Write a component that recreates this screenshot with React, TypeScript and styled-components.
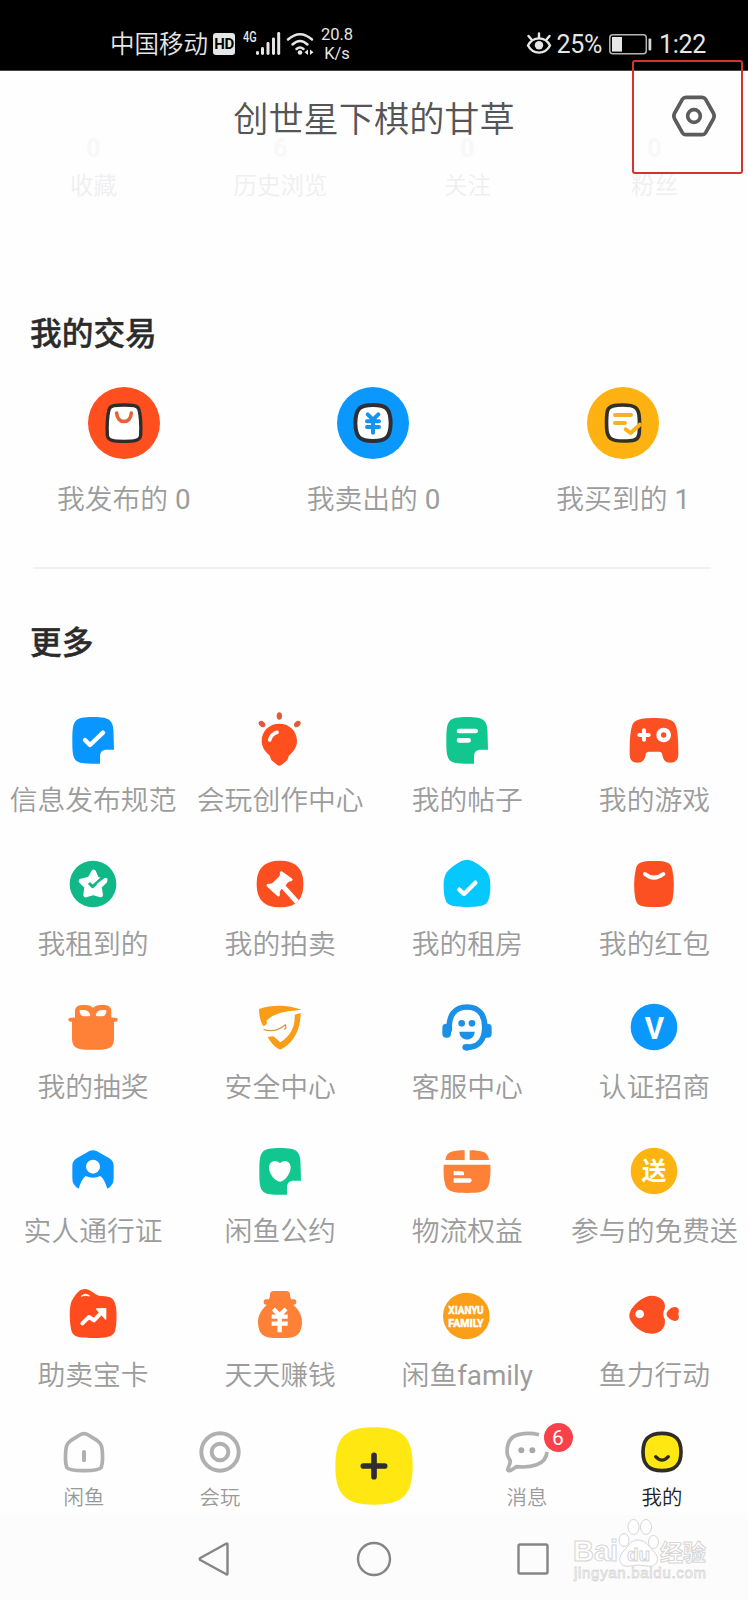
import React from "react";
import styled, { createGlobalStyle } from "styled-components";

const GlobalStyle = createGlobalStyle`
  * { box-sizing: border-box; }
  body {
    margin: 0;
    background: #fff;
    font-family: Roboto, "Noto Sans CJK SC", sans-serif;
    font-weight: 350;
  }
  svg { display: block; overflow: visible; }
`;

const Screen = styled.div`
  position: relative;
  width: 748px;
  height: 1600px;
  overflow: hidden;
  background: #fefefe;
  display: flex;
  flex-direction: column;
`;

/* ---------- status bar ---------- */
const StatusBar = styled.header`
  height: 71px;
  flex: none;
  background: #000;
  border-bottom: 1px solid #4a4446;
  color: #e6e6e6;
  display: flex;
  justify-content: space-between;
  padding: 17px 42px 0 110px;
`;
const StatusGroup = styled.div`
  display: flex;
  align-items: center;
  height: 54px;
`;
const Carrier = styled.span`
  font-size: 24.5px;
  line-height: 30px;
  white-space: nowrap;
  width: 103px;
  padding-top: 2px;
`;
const HdBadge = styled.span`
  width: 22px;
  height: 22px;
  border-radius: 3px;
  background: #e6e6e6;
  color: #000;
  font-size: 15px;
  font-weight: 700;
  line-height: 23px;
  text-align: center;
  letter-spacing: -0.5px;
`;
const NetworkType = styled.span`
  font-size: 14px;
  font-weight: 500;
  line-height: 14px;
  width: 17px;
  margin: -14px -4px 0 8px;
  transform: scaleX(0.78);
  transform-origin: left;
`;
const Speed = styled.div`
  width: 44px;
  margin-left: 0;
  font-size: 16.5px;
  font-weight: 400;
  line-height: 19px;
  text-align: center;
`;
const StatusText = styled.span<{ $left: number }>`
  font-size: 25px;
  font-weight: 400;
  line-height: 30px;
  letter-spacing: -0.3px;
  padding-top: 1px;
  margin-left: ${(p) => p.$left}px;
`;

/* ---------- profile header ---------- */
const ProfileHeader = styled.section`
  height: 242px;
  flex: none;
`;
const TitleRow = styled.div`
  display: grid;
  grid-template-columns: 1fr auto 1fr;
  align-items: start;
  height: 69px;
  padding: 23px 32px 0;
`;
const Title = styled.h1`
  grid-column: 2;
  margin: 8px 0 0;
  font-size: 35.2px;
  line-height: 36px;
  font-weight: 350;
  color: #555;
`;
const SettingsButton = styled.div`
  justify-self: end;
  width: 44px;
  height: 44px;
`;
const Stats = styled.div`
  display: grid;
  grid-template-columns: repeat(4, 1fr);
  text-align: center;
`;
const Stat = styled.div`
  display: flex;
  flex-direction: column;
`;
const StatValue = styled.span`
  height: 31px;
  font-size: 25px;
  line-height: 18px;
  font-weight: 700;
  color: #f8f8f8;
`;
const StatLabel = styled.span`
  font-size: 23.5px;
  line-height: 30px;
  color: #efefef;
`;

/* ---------- sections ---------- */
const SectionTitle = styled.h2<{ $gap: number }>`
  margin: 0 0 ${(p) => p.$gap}px 30px;
  padding-top: 2px;
  font-size: 31.7px;
  line-height: 40px;
  font-weight: 500;
  color: #2b2b2b;
  flex: none;
  -webkit-text-stroke: 0.4px #2b2b2b;
`;
const Trades = styled.div`
  display: grid;
  grid-template-columns: repeat(3, 1fr);
  height: 180px;
  flex: none;
  margin-left: -1px;
`;
const Cell = styled.div<{ $gap: number }>`
  display: flex;
  flex-direction: column;
  align-items: center;
  gap: ${(p) => p.$gap}px;
`;
const Label = styled.span`
  font-size: 27.8px;
  line-height: 32px;
  color: #9c9c9c;
  white-space: nowrap;
`;
const Latin = styled.span`
  font-weight: 400;
`;
const Divider = styled.div`
  height: 2px;
  flex: none;
  margin: 0 37px 53px 33px;
  background: #f1f1f1;
`;
const MoreGrid = styled.div`
  display: grid;
  grid-template-columns: repeat(4, 1fr);
  grid-auto-rows: 107px;
  row-gap: 36.7px;
  height: 681px;
  flex: none;
  margin-left: -0.5px;
`;

/* ---------- bottom bars ---------- */
const TabBar = styled.nav`
  display: grid;
  grid-template-columns: 168px 104px 204px 102px 168px;
  height: 124px;
  flex: none;
  padding-top: 36px;
`;
const Tab = styled.div<{ $active?: boolean }>`
  position: relative;
  display: flex;
  flex-direction: column;
  align-items: center;
  gap: 8px;
  font-size: 20.4px;
  line-height: 26px;
  color: ${(p) => (p.$active ? "#222" : "#9a9a9a")};
`;
const Badge = styled.span`
  position: absolute;
  left: 67.5px;
  top: -4px;
  width: 29px;
  height: 29px;
  border-radius: 50%;
  background: #f8414a;
  color: #fff;
  font-size: 21px;
  font-weight: 400;
  line-height: 30px;
  text-align: center;
`;
const SystemNav = styled.footer`
  flex: 1;
  background: #fcfcfc;
  display: flex;
  align-items: center;
  justify-content: center;
  gap: 121px;
  padding-top: 3px;
`;

/* ---------- overlays ---------- */
const HighlightBox = styled.div`
  position: absolute;
  left: 632px;
  top: 60px;
  width: 111px;
  height: 114px;
  border: 2px solid #d8322c;
  border-radius: 3px;
`;
const Watermark = styled.div`
  position: absolute;
  left: 570px;
  top: 1515px;
`;

const NOTE =
  "M0-69C27-69 43-67 52-57C61-48 62-30 62-8L63 29H42C27 29 21 36 21 50V71H-6C-30 71-44 69-53 59C-62 48-62 27-62 0C-62-27-61-47-52-57C-43-67-27-69 0-69Z";

const Art = ({ size = 60, children }: { size?: number; children: React.ReactNode }) => (
  <svg
    width={size}
    height={size}
    viewBox={`${-size * 1.5} ${-size * 1.5} ${size * 3} ${size * 3}`}
    fill="none"
    strokeLinecap="round"
    strokeLinejoin="round"
  >
    {children}
  </svg>
);

const tradeItems = [
  {
    label: "我发布的",
    latin: " 0",
    art: (
      <>
        <circle r="108" fill="#ff4f1f" />
        <path d="M0-54C25-54 41-53 45-40C50-20 51 15 50 37C48 53 30 55 0 55C-30 55-48 53-50 37C-51 15-50-20-45-40C-41-53-25-54 0-54Z" fill="#fff" stroke="#2f2c2c" strokeWidth="10" />
        <path d="M-22-30C-20 4 20 4 22-30" stroke="#e8603a" strokeWidth="11" />
      </>
    ),
  },
  {
    label: "我卖出的",
    latin: " 0",
    art: (
      <>
        <circle r="108" fill="#0a98ff" />
        <path d="M0-54C40-54 52-43 53 0C52 43 40 54 0 54S-52 43-53 0C-52-43-40-54 0-54Z" fill="#fff" stroke="#2b2f36" strokeWidth="12" />
        <path d="M-16-26L0-10L16-26M0-9V29M-18-5H18M-18 12H18" stroke="#1494f0" strokeWidth="12" />
      </>
    ),
  },
  {
    label: "我买到的",
    latin: " 1",
    art: (
      <>
        <circle r="108" fill="#fdb211" />
        <path d="M0-54C36-54 48-46 49-14C50 10 50 20 48 35C45 52 30 54 0 54C-36 54-48 46-49 14C-50-8-50-24-46-38C-42-52-26-54 0-54Z" fill="#fff" stroke="#33302a" strokeWidth="11" />
        <path d="M-24-24H24M-24 0H6" stroke="#f0b42a" strokeWidth="12" />
        <path d="M8 19L23 30L50 5" stroke="#fdb211" strokeWidth="12" />
      </>
    ),
  },
];

const moreItems = [
  {
    label: "信息发布规范",
    art: (
      <>
        <path d={NOTE} fill="#0996ff" />
        <path d="M-24 0L-9 15L30-22" stroke="#fff" strokeWidth="13" />
      </>
    ),
  },
  {
    label: "会玩创作中心",
    art: (
      <>
        <path d="M-2-49C29-49 51-26 51 3C51 23 39 36 28 46C24 50 26 57 19 63L4 75Q-2 80-8 75L-23 63C-30 57-28 50-32 46C-43 36-55 23-55 3C-55-26-33-49-2-49Z" fill="#ff4f1f" />
        <path d="M-31 0Q-27-17-9-23" stroke="#fff" strokeWidth="11" />
        <g fill="#dd5a3b">
          <ellipse cx="-2" cy="-72" rx="8" ry="11" />
          <ellipse cx="-54" cy="-48" rx="8" ry="11" transform="rotate(-48 -54 -48)" />
          <ellipse cx="52" cy="-48" rx="8" ry="11" transform="rotate(48 52 -48)" />
        </g>
      </>
    ),
  },
  {
    label: "我的帖子",
    art: (
      <>
        <path d={NOTE} fill="#12c78f" />
        <path d="M-24-27H26M-24 1H5" stroke="#fff" strokeWidth="14" />
      </>
    ),
  },
  {
    label: "我的游戏",
    art: (
      <>
        <path d="M0-66C50-66 62-58 67-38C72-20 73 10 73 42C73 60 64 68 49 68C34 68 27 58 25 44Q24 35 15 35H-15Q-24 35-25 44C-27 58-34 68-50 68C-65 68-73 60-73 42C-73 10-72-20-67-38C-62-58-50-66 0-66Z" fill="#fc5022" />
        <path d="M-44-15H-16M-30-29V-1" stroke="#fff" strokeWidth="12" />
        <circle cx="29" cy="-15" r="15" stroke="#fff" strokeWidth="14" />
      </>
    ),
  },
  {
    label: "我租到的",
    art: (
      <>
        <circle r="70" fill="#0fb886" />
        <path d="M2-36L11-15L36-9L19 8L23 33L1 26L-22 33L-19 8L-36-9L-10-15Z" fill="#fff" stroke="#fff" strokeWidth="14" />
        <path d="M-12-3L-1 8L32-22" stroke="#0fb886" strokeWidth="9" strokeLinecap="butt" />
        <path d="M17 2L38-13" stroke="#fff" strokeWidth="11" />
      </>
    ),
  },
  {
    label: "我的拍卖",
    art: (
      <>
        <path d="M0-70C46-70 70-48 70 0S46 70 0 70S-70 48-70 0S-46-70 0-70Z" fill="#fc4f20" />
        <path d="M4-34L33-13C22-12 18-7 15 0L0 13C-5 18-7 24-5 33L-36 4C-25 5-20 2-15-4L-2-16C4-21 6-27 4-34Z" fill="#fff" stroke="#fff" strokeWidth="9" />
        <path d="M7 5L51 54" stroke="#fff" strokeWidth="15" strokeLinecap="butt" />
      </>
    ),
  },
  {
    label: "我的租房",
    art: (
      <>
        <path d="M-18-68Q0-78 18-68C32-60 44-52 54-43C66-32 70-16 70 5C70 22 69 34 65 46C60 64 47 69 0 69S-60 64-65 46C-69 34-70 22-70 5C-70-16-66-32-54-43C-44-52-32-60-18-68Z" fill="#05c8ff" />
        <path d="M-23 17L-9 30L25-4" stroke="#fff" strokeWidth="13" />
      </>
    ),
  },
  {
    label: "我的红包",
    art: (
      <>
        <path d="M0-69C40-69 51-64 55-43C61-15 61 15 56 44C51 65 40 69 0 69S-51 65-56 44C-61 15-61-15-55-43C-51-64-40-69 0-69Z" fill="#fc5022" />
        <path d="M-27-30Q0-8 28-30" stroke="#fff" strokeWidth="12" />
      </>
    ),
  },
  {
    label: "我的抽奖",
    art: (
      <>
        <path d="M-54-25V-46Q-54-66-34-66H-20Q-7-66 0-58Q7-66 20-66H34Q55-66 55-46V-25Z" fill="#ff8138" />
        <path d="M-38-51H-26Q-12-50-8-35Q-9-32-14-32H-28Q-38-33-40-46Q-41-51-38-51Z" fill="#fff" />
        <path d="M38-51H26Q12-50 8-35Q9-32 14-32H28Q38-33 40-46Q41-51 38-51Z" fill="#fff" />
        <path d="M-68-22H68" stroke="#ff8138" strokeWidth="12" />
        <path d="M-63-28H63V34C63 60 50 68 20 68H-20C-50 68-63 60-63 34Z" fill="#ff8138" />
      </>
    ),
  },
  {
    label: "安全中心",
    art: (
      <>
        <path d="M-63-54C-22-67 22-67 64-52C30-48-13-45-35-24L-41-18Q-34-9-49-2C-58-11-63-36-63-54Z" fill="#f99c16" />
        <path d="M62-42C62 4 43 50 0 68C-18 60-29 44-37 30L-20 28L1 46C32 26 46 0 44-37Z" fill="#f99c16" />
        <path d="M-48 8Q-12 18 16-7Q20 5 14 6" stroke="#d99a48" strokeWidth="4" />
      </>
    ),
  },
  {
    label: "客服中心",
    art: (
      <>
        <path d="M-53 8C-56-34-37-60 0-60C37-60 56-34 53 8C51 38 34 61 0 61" stroke="#1a91e6" strokeWidth="17" />
        <rect x="-74" y="-10" width="26" height="42" rx="12" fill="#1a91e6" />
        <rect x="48" y="-10" width="26" height="42" rx="12" fill="#1a91e6" />
        <ellipse cx="-1" cy="61" rx="13" ry="10" fill="#1a91e6" />
        <circle cx="-16" cy="-11" r="10" fill="#1a91e6" />
        <circle cx="15" cy="-11" r="10" fill="#1a91e6" />
        <path d="M-23 14H23C22 45-22 45-23 14Z" fill="#1a91e6" />
      </>
    ),
  },
  {
    label: "认证招商",
    art: (
      <>
        <circle r="70" fill="#0a97fe" />
        <text x="-28" y="35" textLength="58" lengthAdjust="spacingAndGlyphs" fontSize="93" fontWeight="700" fill="#fff">V</text>
      </>
    ),
  },
  {
    label: "实人通行证",
    art: (
      <>
        <path d="M-12-59Q0-66 12-59L49-38Q62-30 62-16V22Q62 44 43 53C38 35 31 22 22 15Q0 25-22 15C-31 22-38 35-43 53Q-62 44-62 22V-16Q-62-30-49-38Z" fill="#0996ff" />
        <circle cy="-13" r="21" fill="#fff" />
      </>
    ),
  },
  {
    label: "闲鱼公约",
    art: (
      <>
        <path d={NOTE} fill="#12c78f" />
        <path d="M0-23C15-38 33-28 32-9C31 8 14 32 0 32S-32 10-33-8C-34-27-15-38 0-23Z" fill="#fff" />
      </>
    ),
  },
  {
    label: "物流权益",
    art: (
      <>
        <path d="M-7-62V-33H-65C-62-57-45-62-7-62ZM8-62V-33H66C63-57 45-62 8-62Z" fill="#ff8138" />
        <path d="M-70-19H70C71 5 70 25 65 43C58 63 40 66 0 66S-58 63-65 43C-70 25-71 5-70-19Z" fill="#ff8138" />
        <path d="M-40 1H-15Q-9 1-9 7V13H-40ZM-40 22H8Q14 22 14 28T8 35H-40Z" fill="#fff" />
      </>
    ),
  },
  {
    label: "参与的免费送",
    art: (
      <>
        <circle r="70" fill="#fdb411" />
        <text y="27" textAnchor="middle" fontSize="74" fontWeight="700" fill="#fff">送</text>
      </>
    ),
  },
  {
    label: "助卖宝卡",
    art: (
      <>
        <path d="M-66-37C-60-50-45-78-26-78C-7-78 2-62 20-57C55-58 67-50 70-15C71 8 71 27 67 45C62 65 45 69 0 69S-60 66-65 46C-70 25-72-15-66-37Z" fill="#ff4b1d" />
        <path d="M-34-57Q-23-68-10-57Q-23-61-34-57Z" fill="#fff" stroke="#fff" strokeWidth="3" />
        <path d="M-32 25L-12 6L3 16L28-10" stroke="#fff" strokeWidth="12" />
        <path d="M11-18L38-19V12Z" fill="#fff" stroke="#fff" strokeWidth="4" />
      </>
    ),
  },
  {
    label: "天天赚钱",
    art: (
      <>
        <path d="M-30-60Q-31-72-18-72H18Q31-72 30-60Q30-53 33-47H42Q49-47 49-39T42-31H39C58-15 67 2 66 25C64 58 48 69 18 69H-18C-48 69-64 58-66 25C-67 2-57-15-39-31H-42Q-49-31-49-39T-42-47H-33Q-30-53-30-60Z" fill="#ff8138" />
        <path d="M-20-18L-1 1L18-18M-1 1V52M-25 5H23M-25 26H23" stroke="#fff" strokeWidth="13" strokeLinecap="butt" />
      </>
    ),
  },
  {
    label: "闲鱼",
    latin: "family",
    art: (
      <>
        <circle cx="-2" cy="3" r="70" fill="#fb9e18" />
        <g fontSize="35" fontWeight="900" fill="#fff" stroke="#fff" strokeWidth="1">
          <text x="-56" y="-2" textLength="106" lengthAdjust="spacingAndGlyphs">XIANYU</text>
          <text x="-56" y="35" textLength="106" lengthAdjust="spacingAndGlyphs">FAMILY</text>
        </g>
      </>
    ),
  },
  {
    label: "鱼力行动",
    art: (
      <>
        <path d="M-69-16C-52-42-26-58-8-58C18-58 38-41 32-19Q24-2 32 11C38 38 18 56-8 56C-32 56-56 40-69 19Q-79 2-69-16Z" fill="#fc5022" />
        <circle cx="-43" cy="-3" r="13" fill="#fff" />
        <path d="M41-11Q50-24 64-24Q79-22 73-3Q79 15 64 18Q50 17 41 6Q34-3 41-11Z" fill="#fc5022" />
      </>
    ),
  },
];

const SignalIcon = () => (
  <svg width="25" height="24" viewBox="0 0 25 24" fill="#e6e6e6">
    <rect x="0" y="19" width="3" height="4" rx="1.4" />
    <rect x="5" y="15" width="3" height="8" rx="1.4" />
    <rect x="10.5" y="10" width="3" height="13" rx="1.4" />
    <rect x="16" y="5.5" width="3" height="17.5" rx="1.4" />
    <rect x="21.2" y="0" width="3" height="23" rx="1.4" />
  </svg>
);

const WifiIcon = () => (
  <svg width="29" height="24" viewBox="0 0 29 24" fill="none" stroke="#e6e6e6" strokeWidth="2.5" strokeLinecap="round">
    <path d="M2 7.5Q14-3 26 7.5M6.5 12.5Q14 5.5 21.5 12.5M10.5 17Q14 14 17.5 17" />
    <circle cx="14" cy="20.5" r="2.3" fill="#e6e6e6" stroke="none" />
    <path d="M22 17.5V23L18.5 20.3ZM24 17.5V23L27.5 20.3Z" fill="#e6e6e6" stroke="none" />
  </svg>
);

const EyeIcon = () => (
  <svg width="26" height="24" viewBox="0 0 26 24" fill="none" stroke="#e6e6e6" strokeWidth="2.4" strokeLinecap="round">
    <path d="M2 13.5C7 4 19 4 24 13.5C19 23 7 23 2 13.5Z" />
    <circle cx="13" cy="13.2" r="4.2" fill="#e6e6e6" stroke="none" />
    <path d="M13 1.5V6M2.5 4L5.5 7.5M23.5 4L20.5 7.5" />
  </svg>
);

const BatteryIcon = () => (
  <svg width="43" height="21" viewBox="0 0 43 21">
    <rect x="0.8" y="0.8" width="36.5" height="19" rx="3" fill="none" stroke="#b5b5b5" strokeWidth="1.5" />
    <rect x="3" y="3" width="10" height="14.6" fill="#e6e6e6" />
    <rect x="39.5" y="4.5" width="2.8" height="12" rx="1" fill="#d5d5d5" />
  </svg>
);

const stats = [
  ["0", "收藏"],
  ["6", "历史浏览"],
  ["0", "关注"],
  ["0", "粉丝"],
];

export default function App() {
  return (
    <>
      <GlobalStyle />
      <Screen>
        <StatusBar>
          <StatusGroup>
            <Carrier>中国移动</Carrier>
            <HdBadge>HD</HdBadge>
            <NetworkType>4G</NetworkType>
            <SignalIcon />
            <svg width="5" height="1" />
            <WifiIcon />
            <Speed>
              20.8
              <br />
              K/s
            </Speed>
          </StatusGroup>
          <StatusGroup>
            <EyeIcon />
            <StatusText $left={4}>25%</StatusText>
            <svg width="7" height="1" />
            <BatteryIcon />
            <StatusText $left={7}>1:22</StatusText>
          </StatusGroup>
        </StatusBar>

        <ProfileHeader>
          <TitleRow>
            <Title>创世星下棋的甘草</Title>
            <SettingsButton>
              <Art size={44}>
                <path d="M-24-56Q-31-56-35-50L-58-9Q-63 0-58 9L-35 50Q-31 56-24 56H24Q31 56 35 50L58 9Q63 0 58-9L35-50Q31-56 24-56Z" stroke="#5c5c5c" strokeWidth="11" />
                <circle r="19" stroke="#5c5c5c" strokeWidth="11" />
              </Art>
            </SettingsButton>
          </TitleRow>
          <Stats>
            {stats.map(([value, label]) => (
              <Stat key={label}>
                <StatValue>{value}</StatValue>
                <StatLabel>{label}</StatLabel>
              </Stat>
            ))}
          </Stats>
        </ProfileHeader>

        <SectionTitle $gap={32}>我的交易</SectionTitle>
        <Trades>
          {tradeItems.map((item) => (
            <Cell key={item.label} $gap={24.5}>
              <Art size={72}>{item.art}</Art>
              <Label>
                {item.label}
                <Latin>{item.latin}</Latin>
              </Label>
            </Cell>
          ))}
        </Trades>
        <Divider />

        <SectionTitle $gap={46}>更多</SectionTitle>
        <MoreGrid>
          {moreItems.map((item) => (
            <Cell key={item.label} $gap={15}>
              <Art>{item.art}</Art>
              <Label>
                {item.label}
                {item.latin && <Latin>{item.latin}</Latin>}
              </Label>
            </Cell>
          ))}
        </MoreGrid>

        <TabBar>
          <Tab>
            <Art size={50}>
              <path d="M-13-51Q0-59 13-51L40-34Q52-26 54-10C57 14 56 32 52 46C46 54 28 56 0 56S-46 54-52 46C-56 32-57 14-54-10Q-52-26-40-34Z" stroke="#b0b0b0" strokeWidth="11" />
              <path d="M0 0V25" stroke="#b0b0b0" strokeWidth="12" />
            </Art>
            闲鱼
          </Tab>
          <Tab>
            <Art size={50}>
              <circle r="56" stroke="#b0b0b0" strokeWidth="12" />
              <circle r="25" stroke="#b0b0b0" strokeWidth="12" />
            </Art>
            会玩
          </Tab>
          <Tab>
            <Art size={78}>
              <path d="M0-116C86-116 116-86 116 0S86 116 0 116S-116 86-116 0S-86-116 0-116Z" fill="#ffe811" />
              <path d="M-32 0H32M0-32V32" stroke="#2e2e2e" strokeWidth="17" />
            </Art>
          </Tab>
          <Tab>
            <Art size={50}>
              <path d="M36-52C20-56-4-57-23-53C-49-48-60-27-60 0C-60 13-53 20-50 27C-51 40-58 47-58 54Q-56 58-47 54L-31 44C10 48 57 40 60 0" stroke="#b0b0b0" strokeWidth="11" strokeLinecap="butt" />
              <circle cx="-17" cy="-5" r="9" fill="#a8a8a8" />
              <circle cx="16" cy="-5" r="9" fill="#a8a8a8" />
            </Art>
            消息
            <Badge>6</Badge>
          </Tab>
          <Tab $active>
            <Art size={50}>
              <path d="M0-56C40-56 57-38 57 0S40 56 0 56S-57 38-57 0S-40-56 0-56Z" fill="#ffe811" stroke="#2e2c24" strokeWidth="11" />
              <path d="M-19 14Q0 35 19 14" stroke="#2e2c24" strokeWidth="10" />
            </Art>
            我的
          </Tab>
        </TabBar>

        <SystemNav>
          <svg width="32" height="36" viewBox="0 0 32 36" fill="none" stroke="#858585" strokeWidth="2.4" strokeLinejoin="round">
            <path d="M27.5 2.5Q28.5 2 28.5 3.5V32.5Q28.5 34 27.3 33.3L1.3 19Q0 18 1.3 17Z" />
          </svg>
          <svg width="44" height="36" viewBox="-22 -18 44 36" fill="none" stroke="#858585" strokeWidth="2.4">
            <circle r="16" />
          </svg>
          <svg width="32" height="36" viewBox="0 0 32 36" fill="none" stroke="#858585" strokeWidth="2.4">
            <rect x="1.5" y="3.5" width="29" height="29" rx="1.5" />
          </svg>
        </SystemNav>

        <HighlightBox />
        <Watermark>
          <svg width="140" height="72" viewBox="0 0 140 72" fill="#fff" stroke="#d6d6d6" strokeWidth="1">
            <text x="3" y="46" fontFamily="Liberation Sans" fontWeight="700" fontSize="29">Bai</text>
            <ellipse cx="54" cy="25" rx="5" ry="6.5" />
            <ellipse cx="63.5" cy="12" rx="5.5" ry="7.5" />
            <ellipse cx="76" cy="12" rx="5.5" ry="7.5" />
            <ellipse cx="83.5" cy="27" rx="5" ry="6.5" />
            <path d="M68 25C76 25 80 33 85 38C91 45 85 53 77 51Q68 49 60 51C51 53 47 45 52 38C57 33 60 25 68 25Z" />
            <text x="57" y="46" fontFamily="Liberation Sans" fontWeight="700" fontSize="19">du</text>
            <text x="90" y="46" fontWeight="700" fontSize="23">经验</text>
            <text x="4" y="63" fontFamily="Liberation Sans" fontWeight="400" fontSize="15" textLength="132" strokeWidth="0.8" stroke="#d8d8d8">jingyan.baidu.com</text>
          </svg>
        </Watermark>
      </Screen>
    </>
  );
}
